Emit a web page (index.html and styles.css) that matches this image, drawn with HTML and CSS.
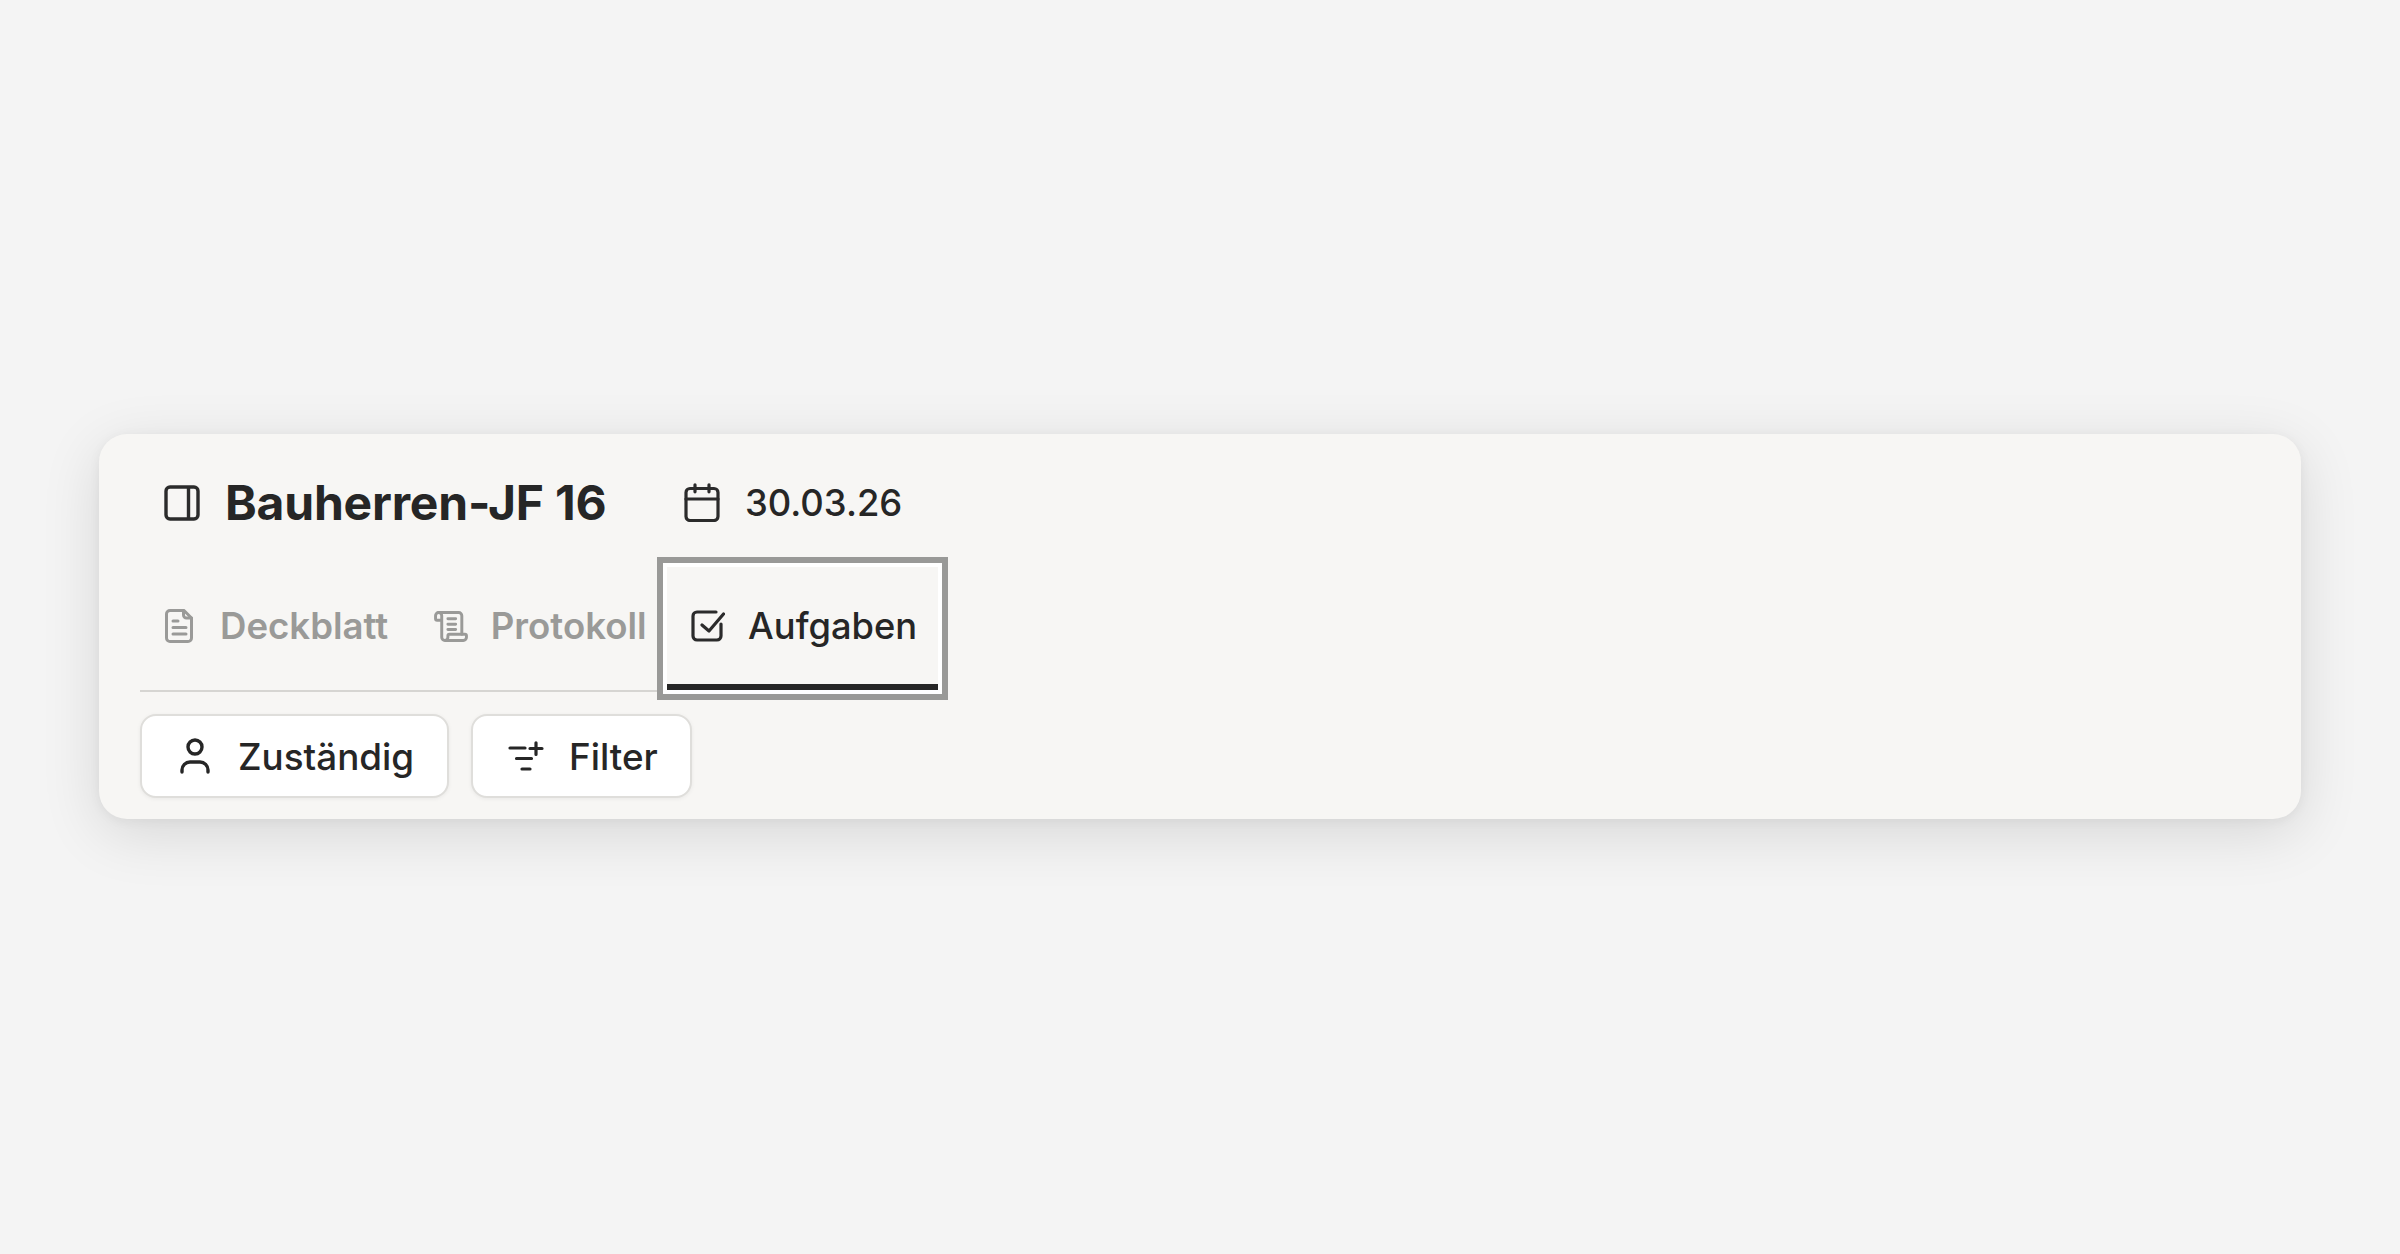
FILE: index.html
```html
<!DOCTYPE html>
<html lang="de">
<head>
<meta charset="utf-8">
<title>Bauherren-JF 16</title>
<link rel="stylesheet" href="styles.css">
</head>
<body>
<main class="card">
  <header class="head">
    <svg class="ico-panel" viewBox="0 0 36 36" fill="none" stroke="currentColor" stroke-width="3.400"><rect x="2" y="2" width="32" height="32" rx="4"/><path d="M24.500 2v32"/></svg>
    <h1 class="title">Bauherren-JF 16</h1>
    <div class="date">
      <svg class="ico-cal" viewBox="0 0 36 39" fill="none" stroke="currentColor" stroke-width="3.200" stroke-linecap="round"><rect x="2" y="5.500" width="32" height="32" rx="4"/><path d="M2 16h32M11 1.800v7M25 1.800v7"/></svg>
      <span>30.03.26</span>
    </div>
  </header>
  <nav class="tabs">
    <a class="tab">
      <svg class="ico-tab" viewBox="0 0 28 34" fill="none" stroke="currentColor" stroke-width="3" stroke-linecap="round" stroke-linejoin="round"><path d="M5 1.500h14l7.500 7.500v20a3.500 3.500 0 0 1-3.500 3.500H5A3.500 3.500 0 0 1 1.500 29V5A3.500 3.500 0 0 1 5 1.500z"/><path d="M18.500 1.500V6a3 3 0 0 0 3 3h5M8 12h5M8 18.500h13M8 25h13"/></svg>
      <span>Deckblatt</span>
    </a>
    <a class="tab">
      <svg class="ico-scroll" viewBox="1 2 22 20" fill="none" stroke="currentColor" stroke-width="1.900" stroke-linecap="round" stroke-linejoin="round"><path d="M19 17V5a2 2 0 0 0-2-2H4"/><path d="M8 21h12a2 2 0 0 0 2-2v-1a1 1 0 0 0-1-1H11a1 1 0 0 0-1 1v1a2 2 0 1 1-4 0V5a2 2 0 1 0-4 0v2a1 1 0 0 0 1 1h3"/><path d="M10 7h5M10 10.500h5M10 14h5"/></svg>
      <span>Protokoll</span>
    </a>
    <a class="tab tab-active">
      <svg class="ico-check" viewBox="0 0 34 32" fill="none" stroke="currentColor" stroke-width="3.200" stroke-linecap="round" stroke-linejoin="round"><path d="M25 2H6a4 4 0 0 0-4 4v20a4 4 0 0 0 4 4h20a4 4 0 0 0 4-4V14"/><path d="M11 15l7 6L32.500 4"/></svg>
      <span>Aufgaben</span>
    </a>
  </nav>
  <div class="actions">
    <button class="btn btn-user">
      <svg class="ico-user" viewBox="0 0 30 36" fill="none" stroke="currentColor" stroke-width="3.400" stroke-linecap="round"><circle cx="15" cy="9" r="7"/><path d="M2 34v-2a8 8 0 0 1 8-8h10a8 8 0 0 1 8 8v2"/></svg>
      <span>Zuständig</span>
    </button>
    <button class="btn btn-filter">
      <svg class="ico-filter" viewBox="0 0 36 31" fill="none" stroke="currentColor" stroke-width="3.200" stroke-linecap="round"><path d="M2 7h15M8.500 17.500h15M14 28h8M28 1.800v11.700M22 7.500h12"/></svg>
      <span>Filter</span>
    </button>
  </div>
</main>
</body>
</html>
```
FILE: styles.css
```css
html, body { margin: 0; height: 100%; }
body {
  background: #f4f4f4;
  font-family: Inter, "Liberation Sans", sans-serif;
  color: #262626;
  display: flex;
  flex-direction: column;
  padding: 434px 99px 0;
  box-sizing: border-box;
}
.card {
  height: 385px;
  box-sizing: border-box;
  background: #f7f6f4;
  border-radius: 28px;
  box-shadow: 0 14px 60px rgba(0, 0, 0, 0.12), 0 2px 12px rgba(0, 0, 0, 0.05);
  padding: 0 41px;
}
.head {
  height: 124px;
  display: flex;
  align-items: center;
  padding: 13px 0 0 24px;
  box-sizing: border-box;
}
.ico-panel { width: 36px; height: 36px; flex: none; color: #2b2b2b; }
.title { margin: 0 0 0 25px; font-size: 48px; font-weight: 700; letter-spacing: -0.2px; line-height: 1; white-space: nowrap; }
.date { display: flex; align-items: center; margin-left: 77.500px; font-size: 36.400px; font-weight: 500; }
.ico-cal { width: 36px; height: 39px; margin-right: 25px; color: #2b2b2b; }
.tabs {
  height: 134px;
  box-sizing: border-box;
  display: flex;
  align-items: flex-start;
  width: 799px;
  border-bottom: 2px solid #d6d5d2;
  padding-left: 24.500px;
}
.tab {
  display: flex;
  align-items: center;
  color: #9a9a98;
  font-size: 36.600px;
  font-weight: 600;
  height: 132px;
  box-sizing: border-box;
  padding-top: 4px;
}
.tab:nth-child(1) { margin-right: 45.500px; }
.tab:nth-child(2) { margin-right: 20.500px; }
.ico-tab { width: 28px; height: 34px; margin-right: 27.500px; flex: none; }
.ico-scroll { width: 34px; height: 31px; margin-right: 23px; flex: none; }
.tab-active {
  color: #262626;
  font-size: 36.300px;
  font-weight: 500;
  position: relative;
  width: 271px;
  height: 123px;
  margin-top: 9px;
  padding: 0 0 5px 24px;
  background: #f7f6f4;
  box-shadow: 0 0 0 4px #fff, 0 0 0 10px #999997;
}
.tab-active::after {
  content: "";
  position: absolute;
  left: 0;
  right: 0;
  bottom: 0;
  height: 6px;
  background: #262626;
}
.ico-check { width: 34px; height: 32px; margin-right: 23px; flex: none; color: #2b2b2b; }
.actions { display: flex; gap: 22px; padding-top: 22px; }
.btn {
  display: flex;
  align-items: center;
  height: 84px;
  box-sizing: border-box;
  background: #fff;
  border: 2px solid #dfdedb;
  border-radius: 16px;
  box-shadow: 0 1px 4px rgba(0, 0, 0, 0.06);
  font: 500 36.800px Inter, "Liberation Sans", sans-serif;
  color: #262626;
  padding: 0;
}
.btn-user { width: 309px; padding-left: 38px; }
.btn-filter { width: 221px; padding-left: 35px; }
.ico-user { width: 30px; height: 36px; margin-right: 28px; flex: none; }
.ico-filter { width: 36px; height: 31px; margin-right: 25px; flex: none; }
```
